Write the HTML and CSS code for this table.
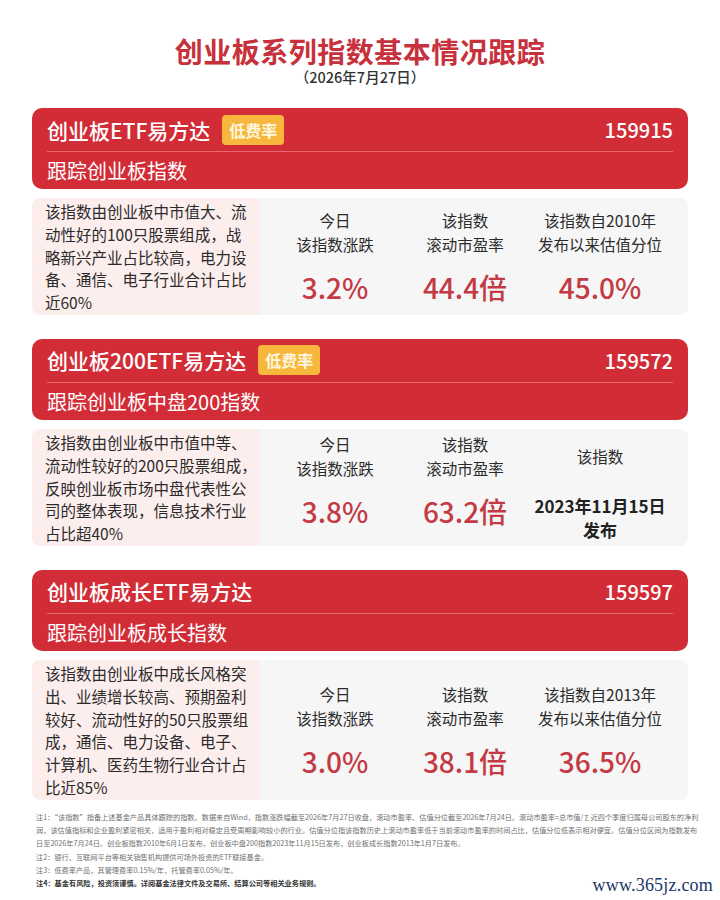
FILE: index.html
```html
<!DOCTYPE html>
<html lang="zh-CN">
<head>
<meta charset="utf-8">
<title>创业板系列指数基本情况跟踪</title>
<link rel="stylesheet" href="styles.css">
</head>
<body>
<div class="page">
  <header class="top">
    <h1 class="title">创业板系列指数基本情况跟踪</h1>
    <div class="date">（2026年7月27日）</div>
  </header>

  <section class="card">
    <div class="head">
      <div class="head-top">
        <div class="fund"><span class="fund-name">创业板ETF易方达</span><span class="tag">低费率</span></div>
        <div class="code">159915</div>
      </div>
      <div class="head-sub">跟踪创业板指数</div>
    </div>
    <div class="info">
      <div class="desc">该指数由创业板中市值大、流<br>动性好的100只股票组成，战<br>略新兴产业占比较高，电力设<br>备、通信、电子行业合计占比<br>近60%</div>
      <div class="stats">
        <div class="label">今日<br>该指数涨跌</div>
        <div class="label">该指数<br>滚动市盈率</div>
        <div class="label">该指数自2010年<br>发布以来估值分位</div>
        <div class="value">3.2%</div>
        <div class="value">44.4倍</div>
        <div class="value">45.0%</div>
      </div>
    </div>
  </section>

  <section class="card">
    <div class="head">
      <div class="head-top">
        <div class="fund"><span class="fund-name">创业板200ETF易方达</span><span class="tag">低费率</span></div>
        <div class="code">159572</div>
      </div>
      <div class="head-sub">跟踪创业板中盘200指数</div>
    </div>
    <div class="info">
      <div class="desc">该指数由创业板中市值中等、<br>流动性较好的200只股票组成，<br>反映创业板市场中盘代表性公<br>司的整体表现，信息技术行业<br>占比超40%</div>
      <div class="stats">
        <div class="label">今日<br>该指数涨跌</div>
        <div class="label">该指数<br>滚动市盈率</div>
        <div class="label">该指数</div>
        <div class="value">3.8%</div>
        <div class="value">63.2倍</div>
        <div class="value value-text">2023年11月15日<br>发布</div>
      </div>
    </div>
  </section>

  <section class="card">
    <div class="head">
      <div class="head-top">
        <div class="fund"><span class="fund-name">创业板成长ETF易方达</span></div>
        <div class="code">159597</div>
      </div>
      <div class="head-sub">跟踪创业板成长指数</div>
    </div>
    <div class="info">
      <div class="desc">该指数由创业板中成长风格突<br>出、业绩增长较高、预期盈利<br>较好、流动性好的50只股票组<br>成，通信、电力设备、电子、<br>计算机、医药生物行业合计占<br>比近85%</div>
      <div class="stats">
        <div class="label">今日<br>该指数涨跌</div>
        <div class="label">该指数<br>滚动市盈率</div>
        <div class="label">该指数自2013年<br>发布以来估值分位</div>
        <div class="value">3.0%</div>
        <div class="value">38.1倍</div>
        <div class="value">36.5%</div>
      </div>
    </div>
  </section>

  <footer class="notes">
    <p>注1：“该指数”指备上述基金产品具体跟踪的指数。数据来自Wind，指数涨跌幅截至2026年7月27日收盘，滚动市盈率、估值分位截至2026年7月24日。滚动市盈率=总市值/∑近四个季度归属母公司股东的净利</p>
    <p>润，该估值指标和企业盈利紧密相关，适用于盈利相对稳定且受周期影响较小的行业。估值分位指该指数历史上滚动市盈率低于当前滚动市盈率的时间占比，估值分位低表示相对便宜。估值分位区间为指数发布</p>
    <p>日至2026年7月24日。创业板指数2010年6月1日发布，创业板中盘200指数2023年11月15日发布，创业板成长指数2013年1月7日发布。</p>
    <p>注2：银行、互联网平台等相关销售机构提供可场外投资的ETF联接基金。</p>
    <p>注3：低费率产品，其管理费率0.15%/年，托管费率0.05%/年。</p>
    <p class="strong">注4：基金有风险，投资须谨慎。详阅基金法律文件及交易所、结算公司等相关业务规则。</p>
  </footer>
  <div class="watermark">www.365jz.com</div>
</div>
</body>
</html>
```

FILE: styles.css
```css
* { box-sizing: border-box; }
html, body { margin: 0; padding: 0; background: #ffffff; }
body {
  font-family: "Noto Sans CJK SC", "Noto Sans", sans-serif;
  color: #333333;
}
.page {
  position: relative;
  width: 720px;
  height: 900px;
  overflow: hidden;
}
.top {
  padding-top: 35px;
  text-align: center;
}
.title {
  margin: 0;
  font-size: 28px;
  line-height: 32px;
  font-weight: 700;
  color: #c7313b;
  letter-spacing: 0.5px;
}
.date {
  font-size: 14.5px;
  line-height: 20px;
  color: #333333;
  font-weight: 500;
}
.card {
  margin: 0 32px;
}
.top + .card { margin-top: 21px; }
.card + .card { margin-top: 24px; }
.head {
  background: #d22d37;
  border-radius: 10px;
  padding: 0 15px;
  color: #ffffff;
}
.head-top {
  height: 44px;
  display: flex;
  align-items: center;
  justify-content: space-between;
  border-bottom: 1px solid #e6676d;
}
.fund {
  display: flex;
  align-items: center;
}
.fund-name {
  font-size: 21px;
  font-weight: 500;
  line-height: 30px;
}
.tag {
  margin-left: 12px;
  background: #f6b73c;
  color: #fff6df;
  font-size: 16px;
  font-weight: 700;
  line-height: 30px;
  height: 30px;
  padding: 0 7px;
  border-radius: 4px;
}
.code {
  font-size: 20px;
  font-weight: 500;
}
.head-sub {
  height: 37px;
  display: flex;
  align-items: center;
  font-size: 20px;
  font-weight: 400;
}
.info {
  margin-top: 9px;
  display: flex;
  align-items: center;
  background: #f6f6f6;
  border-radius: 8px;
}
.desc {
  align-self: stretch;
  width: 228px;
  flex: none;
  background: #fdeeee;
  border-radius: 8px 0 0 8px;
  padding: 2px 0 1px 13px;
  font-size: 15.5px;
  line-height: 22.8px;
  color: #2b2b2b;
  white-space: nowrap;
}
.stats {
  padding-left: 10px;
  display: grid;
  grid-template-columns: 130px 130px 140px;
  row-gap: 14px;
  text-align: center;
}
.label {
  align-self: center;
  font-size: 15.5px;
  line-height: 24px;
  color: #2b2b2b;
  white-space: nowrap;
}
.value {
  align-self: start;
  font-size: 28px;
  line-height: 34px;
  font-weight: 500;
  color: #c33a44;
  white-space: nowrap;
}
.value-text {
  font-size: 17px;
  line-height: 24px;
  font-weight: 700;
  color: #222222;
}
.notes {
  margin: 11px 0 0;
  padding: 0 36px;
  color: #707070;
  font-size: 7.2px;
  line-height: 13.3px;
}
.notes p {
  margin: 0;
  white-space: nowrap;
}
.notes .strong {
  color: #333333;
  font-weight: 700;
}
.watermark {
  position: absolute;
  right: 7px;
  bottom: 4px;
  font-family: "Liberation Serif", "DejaVu Serif", serif;
  font-size: 18px;
  line-height: 22px;
  color: #1c3767;
  letter-spacing: 0.2px;
}
```
